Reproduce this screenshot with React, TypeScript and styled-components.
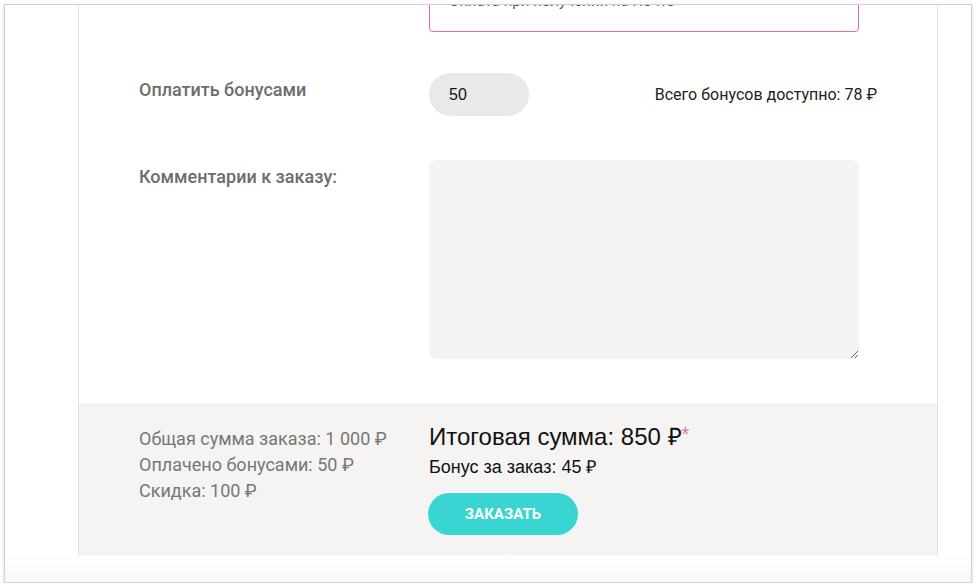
import { FC } from 'react';
import styled, { createGlobalStyle } from 'styled-components';

const GlobalStyle = createGlobalStyle`
  html, body {
    margin: 0;
    padding: 0;
    background: #ffffff;
  }
  body {
    font-family: Roboto, "Noto Sans", sans-serif;
  }
`;

const App: FC = () => {
  return (
    <>
      <GlobalStyle />
      <Frame>
        <Panel>
          <Form>
            <Row>
              <span />
              <SelectBox>Оплата при получении на Почте</SelectBox>
            </Row>
            <BonusRow>
              <Label>Оплатить бонусами</Label>
              <BonusField>
                <Pill>50</Pill>
                <Available>Всего бонусов доступно: 78 ₽</Available>
              </BonusField>
            </BonusRow>
            <CommentRow>
              <Label>Комментарии к заказу:</Label>
              <Comment />
            </CommentRow>
          </Form>
          <Footer>
            <Summary>
              <SummaryLine>Общая сумма заказа: 1 000 ₽</SummaryLine>
              <SummaryLine>Оплачено бонусами: 50 ₽</SummaryLine>
              <SummaryLine>Скидка: 100 ₽</SummaryLine>
            </Summary>
            <Total>
              <TotalTitle>
                Итоговая сумма: 850 ₽<Star>*</Star>
              </TotalTitle>
              <BonusLine>Бонус за заказ: 45 ₽</BonusLine>
              <OrderButton>ЗАКАЗАТЬ</OrderButton>
            </Total>
          </Footer>
        </Panel>
      </Frame>
    </>
  );
};

const Frame = styled.div`
  margin: 4px 0 0 4px;
  width: 966px;
  height: 577px;
  border: 1px solid #d2d2d2;
  box-shadow: 0 1px 3px rgba(0, 0, 0, 0.18);
  background: linear-gradient(to bottom, #ffffff 95%, #f9f9f9 100%);
  overflow: hidden;
`;

const Panel = styled.div`
  margin-left: 73px;
  width: 858px;
  border-left: 1px solid #e2e2e2;
  border-right: 1px solid #e2e2e2;
  background: #ffffff;
`;

const Form = styled.div`
  padding: 0 78px 44px 60px;
  margin-top: -33px;
`;

const Row = styled.div`
  display: grid;
  grid-template-columns: 290px 430px;
  align-items: start;
`;

const SelectBox = styled.div`
  box-sizing: border-box;
  height: 60px;
  padding: 19px 19px 0;
  border: 1px solid #f065ad;
  border-radius: 4px;
  font-size: 15px;
  line-height: 18px;
  color: #555555;
`;

const BonusRow = styled(Row)`
  margin-top: 41px;
  grid-template-columns: 290px 448px;
`;

const CommentRow = styled(Row)`
  margin-top: 44px;
`;

const Label = styled.div`
  padding-top: 7px;
  font-size: 18px;
  line-height: 20px;
  font-weight: 500;
  color: #6d6d6d;
`;

const BonusField = styled.div`
  display: flex;
  align-items: center;
  justify-content: space-between;
`;

const Pill = styled.div`
  box-sizing: border-box;
  width: 100px;
  height: 43px;
  padding-left: 20px;
  display: flex;
  align-items: center;
  border-radius: 22px;
  background: #e9e9e9;
  font-family: "Liberation Sans", Arial, sans-serif;
  font-size: 16px;
  color: #111111;
`;

const Available = styled.div`
  font-size: 16px;
  color: #222222;
`;

const Comment = styled.textarea`
  box-sizing: border-box;
  width: 430px;
  height: 199px;
  border: none;
  border-radius: 8px;
  background: #f3f3f3;
  outline: none;
  margin: 0;
  display: block;
`;

const Footer = styled.div`
  display: grid;
  grid-template-columns: 290px 1fr;
  padding: 23px 60px 0;
  height: 152px;
  box-sizing: border-box;
  background: #f5f4f3;
`;

const Summary = styled.div`
  display: flex;
  flex-direction: column;
`;

const SummaryLine = styled.div`
  font-size: 18px;
  line-height: 26px;
  color: #777777;
`;

const Total = styled.div`
  display: flex;
  flex-direction: column;
  align-items: flex-start;
  margin-top: -2px;
`;

const TotalTitle = styled.div`
  font-family: "Liberation Sans", Arial, sans-serif;
  font-size: 24px;
  line-height: 26px;
  color: #111111;
`;

const Star = styled.span`
  color: #f06aa8;
  font-size: 20px;
  vertical-align: top;
  line-height: 20px;
`;

const BonusLine = styled.div`
  margin-top: 6px;
  font-family: "Liberation Sans", Arial, sans-serif;
  font-size: 18px;
  line-height: 22px;
  color: #111111;
`;

const OrderButton = styled.button`
  margin-top: 15px;
  margin-left: -1px;
  width: 150px;
  height: 42px;
  border: none;
  border-radius: 21px;
  background: #39d5d2;
  color: #ffffff;
  font-family: Roboto, sans-serif;
  font-weight: 700;
  font-size: 15px;
  cursor: pointer;
`;

export default App;
